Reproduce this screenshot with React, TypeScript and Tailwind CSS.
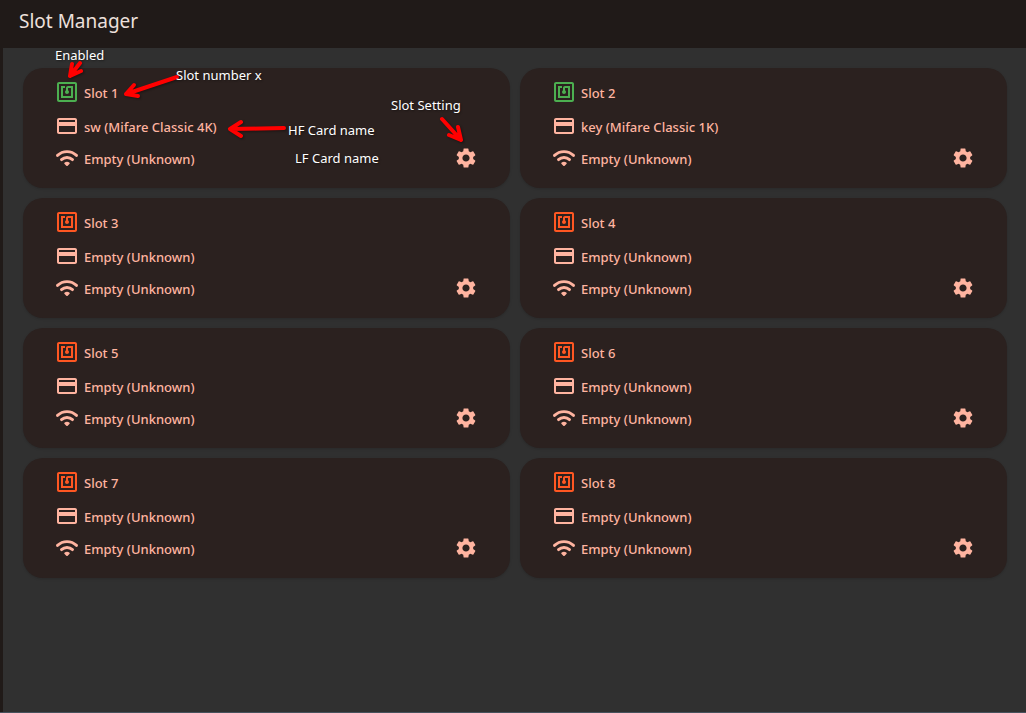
import { MdCreditCard, MdNfc, MdSettings } from "react-icons/md";

type Slot = { id: number; enabled: boolean; hf: string; lf: string };

const EMPTY = "Empty (Unknown)";

const slots: Slot[] = [
  { id: 1, enabled: true, hf: "sw (Mifare Classic 4K)", lf: EMPTY },
  { id: 2, enabled: true, hf: "key (Mifare Classic 1K)", lf: EMPTY },
  { id: 3, enabled: false, hf: EMPTY, lf: EMPTY },
  { id: 4, enabled: false, hf: EMPTY, lf: EMPTY },
  { id: 5, enabled: false, hf: EMPTY, lf: EMPTY },
  { id: 6, enabled: false, hf: EMPTY, lf: EMPTY },
  { id: 7, enabled: false, hf: EMPTY, lf: EMPTY },
  { id: 8, enabled: false, hf: EMPTY, lf: EMPTY },
];

function WifiIcon() {
  return (
    <svg width="24" height="24" viewBox="0 0 24 24" fill="none" stroke="currentColor" strokeWidth="2.9" strokeLinecap="round" aria-hidden="true">
      <path d="M2.5 9.4C7.8 4.3 16.2 4.3 21.5 9.4" />
      <path d="M6.5 13.6C9.6 10.7 14.4 10.7 17.5 13.6" />
      <path d="M9.7 16.6C11.1 15.5 12.9 15.5 14.3 16.6C14.9 17.1 14.9 17.6 14.4 18.1L12.7 19.8C12.3 20.2 11.7 20.2 11.3 19.8L9.6 18.1C9.1 17.6 9.1 17.1 9.7 16.6Z" fill="currentColor" stroke="none" />
    </svg>
  );
}

function SlotCard({ slot }: { slot: Slot }) {
  return (
    <article className="flex items-end justify-between rounded-[20px] bg-[#2b211f] pt-3 pr-8 pb-[18px] pl-8 text-[#ffb4a0] shadow-sm">
      <div className="flex flex-col gap-2">
        <h2 className="mb-[2px] flex items-center gap-[5px]">
          <MdNfc size={24} className={slot.enabled ? "text-[#4caf50]" : "text-[#ff5722]"} />
          <span className="pt-[2px]">Slot {slot.id}</span>
        </h2>
        <p className="flex items-center gap-[5px]">
          <MdCreditCard size={24} />
          <span className="pt-[2px]">{slot.hf}</span>
        </p>
        <p className="flex items-center gap-[5px]">
          <WifiIcon />
          <span className="pt-[2px]">{slot.lf}</span>
        </p>
      </div>
      <button type="button" aria-label={`Slot ${slot.id} settings`}>
        <MdSettings size={24} />
      </button>
    </article>
  );
}

function Arrow({ d }: { d: string }) {
  return <path d={d} fill="none" stroke="#ff0000" strokeWidth="4" strokeLinecap="round" strokeLinejoin="round" />;
}

function Annotations() {
  return (
    <div className="pointer-events-none absolute top-0 left-0 text-[13px] leading-[18px] whitespace-nowrap text-white [text-shadow:1px_1px_2px_#00000066]">
      <svg width="520" height="200" className="absolute top-0 left-0 max-w-none drop-shadow-[1px_1px_1px_#00000066]">
        <Arrow d="M80 63L70 76M72 64L70 76L81 71" />
        <Arrow d="M177 77L126 94M134 85L126 94L138 96" />
        <Arrow d="M284 128L230 129M241 122L230 129L241 136" />
        <Arrow d="M442 119L461 140M458 127L461 140L449 135" />
      </svg>
      <span className="absolute top-[46px] left-[55px]">Enabled</span>
      <span className="absolute top-[66px] left-[176px]">Slot number x</span>
      <span className="absolute top-[96px] left-[391px]">Slot Setting</span>
      <span className="absolute top-[121px] left-[288px]">HF Card name</span>
      <span className="absolute top-[149px] left-[295px]">LF Card name</span>
    </div>
  );
}

export default function App() {
  return (
    <div className="relative flex min-h-screen flex-col border-b border-[#46515c] bg-[#201a18] font-['Noto_Sans',sans-serif]">
      <header className="flex h-12 items-center px-[19px] pb-[6px]">
        <h1 className="text-[19px] leading-7 text-[#ede0dc]">Slot Manager</h1>
      </header>
      <main className="ml-[3px] flex-1 bg-[#303030] py-5 pr-[19px] pl-5">
        <div className="grid grid-cols-2 gap-[10px] text-[13px] leading-5 font-medium">
          {slots.map((slot) => (
            <SlotCard key={slot.id} slot={slot} />
          ))}
        </div>
      </main>
      <Annotations />
    </div>
  );
}
